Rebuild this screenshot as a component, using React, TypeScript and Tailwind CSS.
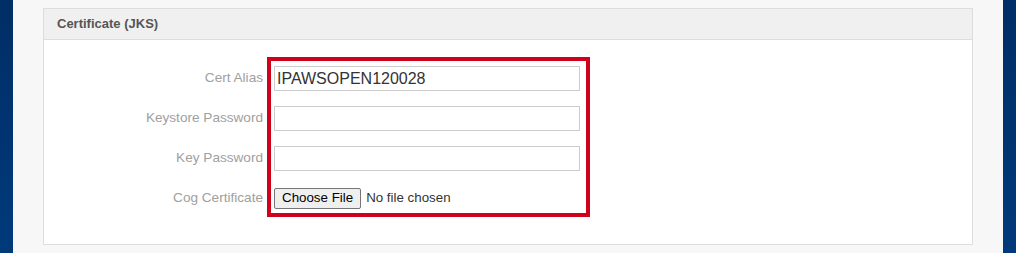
import { useState } from "react";

const labels = ["Cert Alias", "Keystore Password", "Key Password", "Cog Certificate"];

export default function App() {
    const [alias, setAlias] = useState("IPAWSOPEN120028");
    const [keystorePw, setKeystorePw] = useState("");
    const [keyPw, setKeyPw] = useState("");
    const [fileName, setFileName] = useState("");

    return (
        <div className="flex h-[253px] w-full font-['Liberation_Sans',Arial,sans-serif]">
            <div className="w-[13px] bg-gradient-to-b from-[#002e66] to-[#003a7b]" />
            <div className="flex-1 bg-[#f7f7f7] px-[30px] pt-[8px]">
                <div className="border border-[#dddddd] bg-white">
                    {/* Cabecalho do painel */}
                    <div className="flex h-[31px] items-center border-b border-[#dddddd] bg-[#f0f0f0] pl-[13px] text-[13px] font-bold text-[#555555]">
                        Certificate (JKS)
                    </div>
                    <div className="flex pt-[17px] pb-[27px]">
                        <div className="w-[223px] pt-[9px] pr-[4px] text-right text-[13.6px] text-[#a0a0a0]">
                            {labels.map(l => (
                                <div key={l} className="mb-[15px] flex h-[25px] items-center justify-end last:mb-0">
                                    {l}
                                </div>
                            ))}
                        </div>
                        <div className="w-[323px] border-4 border-[#d0021b] pt-[5px] pr-[6px] pb-[3px] pl-[3px]">
                            <input
                                value={alias}
                                onChange={e => setAlias(e.target.value)}
                                className="mb-[15px] block h-[25px] w-[306px] border border-[#cccccc] px-[2px] text-[16px] text-[#333333] outline-none"
                            />
                            <input
                                type="password"
                                value={keystorePw}
                                onChange={e => setKeystorePw(e.target.value)}
                                className="mb-[15px] block h-[25px] w-[306px] border border-[#cccccc] px-[2px] text-[16px] text-[#333333] outline-none"
                            />
                            <input
                                type="password"
                                value={keyPw}
                                onChange={e => setKeyPw(e.target.value)}
                                className="mb-0 block h-[25px] w-[306px] border border-[#cccccc] px-[2px] text-[16px] text-[#333333] outline-none"
                            />
                            <label className="mt-[15px] flex h-[24px] cursor-pointer items-center text-[13.33px] text-[#333333]">
                                <span className="flex h-[21px] items-center rounded-[2px] border border-[#767676] bg-[#efefef] px-[7px] text-black">
                                    Choose File
                                </span>
                                <span className="ml-[5px]">{fileName || "No file chosen"}</span>
                                <input
                                    type="file"
                                    className="hidden"
                                    onChange={e => setFileName(e.target.files?.[0]?.name ?? "")}
                                />
                            </label>
                        </div>
                    </div>
                </div>
            </div>
            <div className="w-[13px] bg-gradient-to-b from-[#002e66] to-[#003a7b]" />
        </div>
    );
}
